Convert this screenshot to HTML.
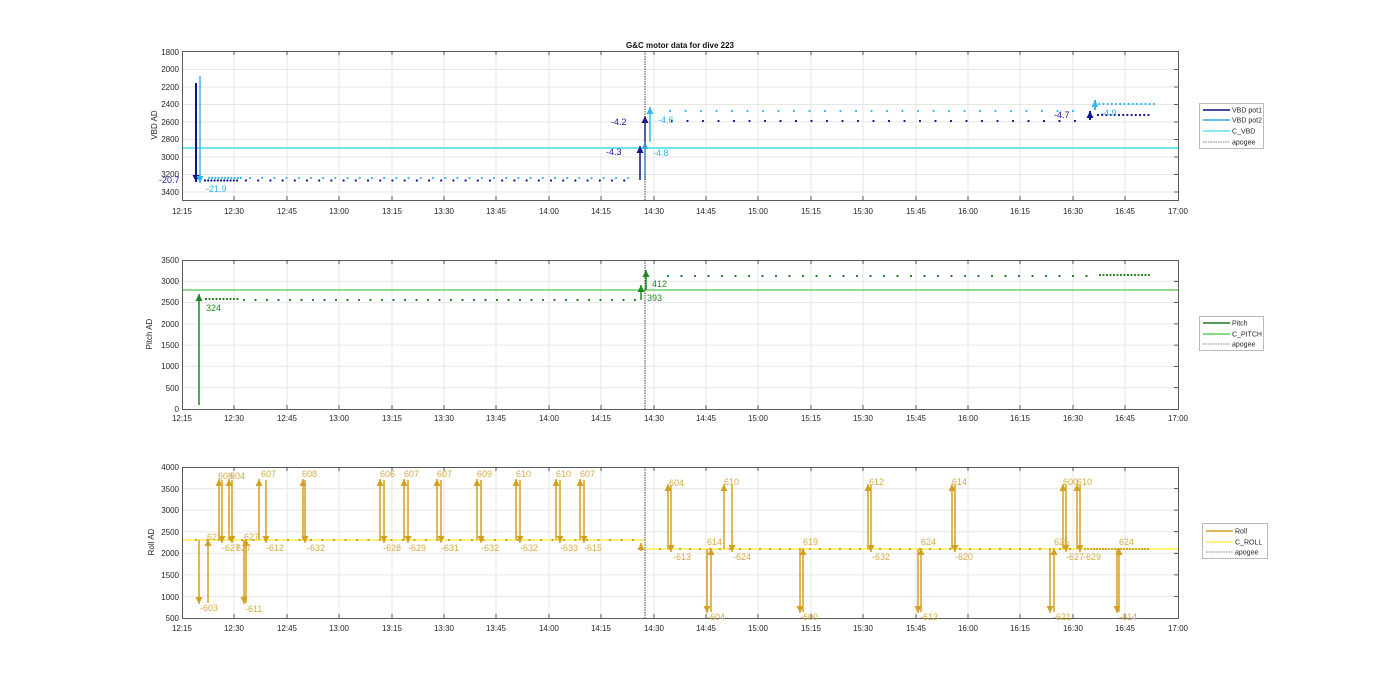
<!DOCTYPE html>
<html><head><meta charset="utf-8"><style>
html,body{margin:0;padding:0;background:#fff;}
svg{display:block;font-family:"Liberation Sans",sans-serif;}
.t{font-size:8px;fill:#262626;}
.lg{font-size:7px;fill:#262626;}
.gr{stroke:#e6e6e6;stroke-width:1;fill:none;}
.tk{stroke:#333;stroke-width:0.8;fill:none;}
.dt{stroke-linecap:round;stroke-width:2.2;}
</style></head><body>
<svg width="1400" height="693" viewBox="0 0 1400 693" xmlns="http://www.w3.org/2000/svg">
<defs>
<marker id="mB" viewBox="0 0 8 8" refX="8" refY="4" markerWidth="8" markerHeight="7" markerUnits="userSpaceOnUse" orient="auto"><path d="M0,0L8,4L0,8z" fill="#101090"/></marker>
<marker id="mL" viewBox="0 0 8 8" refX="8" refY="4" markerWidth="8" markerHeight="7" markerUnits="userSpaceOnUse" orient="auto"><path d="M0,0L8,4L0,8z" fill="#35b8ea"/></marker>
<marker id="mG" viewBox="0 0 8 8" refX="8" refY="4" markerWidth="8" markerHeight="7" markerUnits="userSpaceOnUse" orient="auto"><path d="M0,0L8,4L0,8z" fill="#1e8a1e"/></marker>
<marker id="mR" viewBox="0 0 8 8" refX="8" refY="4" markerWidth="8" markerHeight="7" markerUnits="userSpaceOnUse" orient="auto"><path d="M0,0L8,4L0,8z" fill="#d4a020"/></marker>
</defs>
<rect width="1400" height="693" fill="#fff"/>
<!-- grids -->
<path class="gr" d="M234 51V200M287 51V200M339 51V200M392 51V200M444 51V200M496 51V200M549 51V200M601 51V200M654 51V200M706 51V200M758 51V200M811 51V200M863 51V200M916 51V200M968 51V200M1020 51V200M1073 51V200M1125 51V200M182 69.5H1178M182 87H1178M182 104.5H1178M182 122H1178M182 139.5H1178M182 157H1178M182 174.5H1178M182 192H1178"/>
<path class="gr" d="M234 260V409M287 260V409M339 260V409M392 260V409M444 260V409M496 260V409M549 260V409M601 260V409M654 260V409M706 260V409M758 260V409M811 260V409M863 260V409M916 260V409M968 260V409M1020 260V409M1073 260V409M1125 260V409M182 281.3H1178M182 302.6H1178M182 323.9H1178M182 345.1H1178M182 366.4H1178M182 387.7H1178"/>
<path class="gr" d="M234 467V618M287 467V618M339 467V618M392 467V618M444 467V618M496 467V618M549 467V618M601 467V618M654 467V618M706 467V618M758 467V618M811 467V618M863 467V618M916 467V618M968 467V618M1020 467V618M1073 467V618M1125 467V618M182 488.6H1178M182 510.1H1178M182 531.7H1178M182 553.3H1178M182 574.9H1178M182 596.4H1178"/>
<!-- tick marks -->
<path class="tk" d="M234 200v-4M287 200v-4M339 200v-4M392 200v-4M444 200v-4M496 200v-4M549 200v-4M601 200v-4M654 200v-4M706 200v-4M758 200v-4M811 200v-4M863 200v-4M916 200v-4M968 200v-4M1020 200v-4M1073 200v-4M1125 200v-4M234 51v4M287 51v4M339 51v4M392 51v4M444 51v4M496 51v4M549 51v4M601 51v4M654 51v4M706 51v4M758 51v4M811 51v4M863 51v4M916 51v4M968 51v4M1020 51v4M1073 51v4M1125 51v4M1178 69.5h-4M1178 87h-4M1178 104.5h-4M1178 122h-4M1178 139.5h-4M1178 157h-4M1178 174.5h-4M1178 192h-4"/>
<path class="tk" d="M234 409v-4M287 409v-4M339 409v-4M392 409v-4M444 409v-4M496 409v-4M549 409v-4M601 409v-4M654 409v-4M706 409v-4M758 409v-4M811 409v-4M863 409v-4M916 409v-4M968 409v-4M1020 409v-4M1073 409v-4M1125 409v-4M234 260v4M287 260v4M339 260v4M392 260v4M444 260v4M496 260v4M549 260v4M601 260v4M654 260v4M706 260v4M758 260v4M811 260v4M863 260v4M916 260v4M968 260v4M1020 260v4M1073 260v4M1125 260v4M1178 281.3h-4M1178 302.6h-4M1178 323.9h-4M1178 345.1h-4M1178 366.4h-4M1178 387.7h-4"/>
<path class="tk" d="M234 618v-4M287 618v-4M339 618v-4M392 618v-4M444 618v-4M496 618v-4M549 618v-4M601 618v-4M654 618v-4M706 618v-4M758 618v-4M811 618v-4M863 618v-4M916 618v-4M968 618v-4M1020 618v-4M1073 618v-4M1125 618v-4M234 467v4M287 467v4M339 467v4M392 467v4M444 467v4M496 467v4M549 467v4M601 467v4M654 467v4M706 467v4M758 467v4M811 467v4M863 467v4M916 467v4M968 467v4M1020 467v4M1073 467v4M1125 467v4M1178 488.6h-4M1178 510.1h-4M1178 531.7h-4M1178 553.3h-4M1178 574.9h-4M1178 596.4h-4"/>
<rect x="182.5" y="51.5" width="996" height="149" fill="none" stroke="#333" stroke-width="0.8"/>
<rect x="182.5" y="260.5" width="996" height="149" fill="none" stroke="#333" stroke-width="0.8"/>
<rect x="182.5" y="467.5" width="996" height="151" fill="none" stroke="#333" stroke-width="0.8"/>

<!-- reference lines -->
<line x1="183" y1="148" x2="1178" y2="148" stroke="#6fe6ec" stroke-width="2"/>
<line x1="183" y1="290" x2="1178" y2="290" stroke="#6ad46a" stroke-width="1.5"/>
<line x1="183" y1="540" x2="645" y2="540" stroke="#fff27a" stroke-width="2"/>
<line x1="645" y1="549" x2="1178" y2="549" stroke="#fff27a" stroke-width="2"/>

<!-- VBD dots -->
<line class="dt" x1="205" y1="180.5" x2="240" y2="180.5" stroke="#101090" stroke-dasharray="0 3.2"/>
<line class="dt" x1="209" y1="178" x2="244" y2="178" stroke="#35b8ea" stroke-dasharray="0 3.2"/>
<line class="dt" x1="246" y1="180.5" x2="636" y2="180.5" stroke="#101090" stroke-dasharray="0 12.2"/>
<line class="dt" x1="250" y1="178" x2="636" y2="178" stroke="#35b8ea" stroke-dasharray="0 12.2"/>
<line class="dt" x1="672" y1="121" x2="1088" y2="121" stroke="#101090" stroke-dasharray="0 15.5"/>
<line class="dt" x1="670" y1="111" x2="1086" y2="111" stroke="#35b8ea" stroke-dasharray="0 15.5"/>
<line class="dt" x1="1095" y1="104" x2="1155" y2="104" stroke="#35b8ea" stroke-dasharray="0 4.2" stroke-width="2"/>
<line class="dt" x1="1098" y1="115" x2="1152" y2="115" stroke="#101090" stroke-dasharray="0 4.2" stroke-width="2"/>
<!-- VBD arrows -->
<line x1="196" y1="83" x2="196" y2="182" stroke="#101090" stroke-width="2" marker-end="url(#mB)"/>
<line x1="200" y1="76" x2="200" y2="183" stroke="#35b8ea" stroke-width="1.5" marker-end="url(#mL)"/>
<line x1="640" y1="180" x2="640" y2="146" stroke="#101090" stroke-width="1.5" marker-end="url(#mB)"/>
<line x1="645" y1="148" x2="645" y2="116" stroke="#101090" stroke-width="1.5" marker-end="url(#mB)"/>
<line x1="645" y1="180" x2="645" y2="142" stroke="#35b8ea" stroke-width="1.5" marker-end="url(#mL)"/>
<line x1="650" y1="142" x2="650" y2="107" stroke="#35b8ea" stroke-width="1.5" marker-end="url(#mL)"/>
<line x1="1090" y1="120" x2="1090" y2="111" stroke="#101090" stroke-width="2" marker-end="url(#mB)"/>
<line x1="1095" y1="110" x2="1095" y2="100" stroke="#35b8ea" stroke-width="2" marker-end="url(#mL)"/>

<!-- Pitch dots -->
<line class="dt" x1="206" y1="299" x2="240" y2="299" stroke="#1e7a1e" stroke-width="2" stroke-dasharray="0 3.5"/>
<line class="dt" x1="244" y1="300" x2="636" y2="300" stroke="#1e7a1e" stroke-width="2" stroke-dasharray="0 11.5"/>
<line class="dt" x1="668" y1="276" x2="1098" y2="276" stroke="#1e7a1e" stroke-width="2" stroke-dasharray="0 13.5"/>
<line class="dt" x1="1100" y1="275" x2="1150" y2="275" stroke="#1e7a1e" stroke-width="2" stroke-dasharray="0 3.5"/>
<line x1="199" y1="405" x2="199" y2="294" stroke="#1e8a1e" stroke-width="1.5" marker-end="url(#mG)"/>
<line x1="641" y1="300" x2="641" y2="285" stroke="#1e8a1e" stroke-width="1.5" marker-end="url(#mG)"/>
<line x1="646" y1="290" x2="646" y2="270" stroke="#1e8a1e" stroke-width="1.5" marker-end="url(#mG)"/>

<!-- Roll dots -->
<line class="dt" x1="196" y1="540" x2="636" y2="540" stroke="#c9a030" stroke-width="2" stroke-dasharray="0 11.5"/>
<line class="dt" x1="660" y1="549" x2="1085" y2="549" stroke="#c9a030" stroke-width="2" stroke-dasharray="0 10"/>
<line class="dt" x1="1085" y1="549" x2="1150" y2="549" stroke="#c9a030" stroke-width="2" stroke-dasharray="0 3"/>
<!-- Roll arrows -->
<g stroke="#d4a020" stroke-width="1.5" marker-end="url(#mR)">
<line x1="199" y1="540" x2="199" y2="604"/><line x1="208" y1="603" x2="208" y2="539"/>
<line x1="219" y1="540" x2="219" y2="479"/><line x1="222" y1="480" x2="222" y2="543"/>
<line x1="229" y1="540" x2="229" y2="479"/><line x1="232" y1="480" x2="232" y2="543"/>
<line x1="244" y1="540" x2="244" y2="604"/><line x1="246" y1="603" x2="246" y2="539"/>
<line x1="259" y1="540" x2="259" y2="479"/><line x1="266" y1="480" x2="266" y2="543"/>
<line x1="303" y1="540" x2="303" y2="479"/><line x1="305" y1="480" x2="305" y2="543"/>
<line x1="380" y1="540" x2="380" y2="479"/><line x1="384" y1="480" x2="384" y2="543"/>
<line x1="404" y1="540" x2="404" y2="479"/><line x1="408" y1="480" x2="408" y2="543"/>
<line x1="437" y1="540" x2="437" y2="479"/><line x1="441" y1="480" x2="441" y2="543"/>
<line x1="477" y1="540" x2="477" y2="479"/><line x1="481" y1="480" x2="481" y2="543"/>
<line x1="516" y1="540" x2="516" y2="479"/><line x1="520" y1="480" x2="520" y2="543"/>
<line x1="556" y1="540" x2="556" y2="479"/><line x1="560" y1="480" x2="560" y2="543"/>
<line x1="580" y1="540" x2="580" y2="479"/><line x1="584" y1="480" x2="584" y2="543"/>
<line x1="641" y1="551" x2="641" y2="543"/>
<line x1="668" y1="549" x2="668" y2="484"/><line x1="671" y1="485" x2="671" y2="552"/>
<line x1="707" y1="549" x2="707" y2="613"/><line x1="711" y1="612" x2="711" y2="548"/>
<line x1="724" y1="549" x2="724" y2="484"/><line x1="732" y1="485" x2="732" y2="552"/>
<line x1="800" y1="549" x2="800" y2="613"/><line x1="803" y1="612" x2="803" y2="548"/>
<line x1="868" y1="549" x2="868" y2="484"/><line x1="871" y1="485" x2="871" y2="552"/>
<line x1="918" y1="549" x2="918" y2="613"/><line x1="921" y1="612" x2="921" y2="548"/>
<line x1="952" y1="549" x2="952" y2="484"/><line x1="955" y1="485" x2="955" y2="552"/>
<line x1="1050" y1="549" x2="1050" y2="613"/><line x1="1054" y1="612" x2="1054" y2="548"/>
<line x1="1063" y1="549" x2="1063" y2="484"/><line x1="1066" y1="485" x2="1066" y2="552"/>
<line x1="1077" y1="549" x2="1077" y2="484"/><line x1="1080" y1="485" x2="1080" y2="552"/>
<line x1="1117" y1="549" x2="1117" y2="613"/><line x1="1119" y1="612" x2="1119" y2="548"/>
</g>

<!-- apogee lines -->
<g stroke="#444" stroke-width="1" stroke-dasharray="1.5,1">
<line x1="645" y1="51" x2="645" y2="200"/><line x1="645" y1="260" x2="645" y2="409"/><line x1="645" y1="467" x2="645" y2="618"/>
</g>

<!-- title -->
<text x="680" y="48" text-anchor="middle" style="font-size:8px;font-weight:bold;fill:#111">G&amp;C motor data for dive 223</text>
<text transform="translate(157,125) rotate(-90)" text-anchor="middle" class="t">VBD AD</text>
<text transform="translate(152,334) rotate(-90)" text-anchor="middle" class="t">Pitch AD</text>
<text transform="translate(154,542) rotate(-90)" text-anchor="middle" class="t">Roll AD</text>
<g class="t" text-anchor="end">
<text x="179" y="55">1800</text><text x="179" y="72">2000</text><text x="179" y="90">2200</text><text x="179" y="107">2400</text><text x="179" y="125">2600</text><text x="179" y="142">2800</text><text x="179" y="160">3000</text><text x="179" y="177">3200</text><text x="179" y="195">3400</text>
<text x="179" y="263">3500</text><text x="179" y="284">3000</text><text x="179" y="305">2500</text><text x="179" y="327">2000</text><text x="179" y="348">1500</text><text x="179" y="369">1000</text><text x="179" y="391">500</text><text x="179" y="412">0</text>
<text x="179" y="470">4000</text><text x="179" y="492">3500</text><text x="179" y="513">3000</text><text x="179" y="535">2500</text><text x="179" y="556">2000</text><text x="179" y="578">1500</text><text x="179" y="600">1000</text><text x="179" y="621">500</text>
</g>
<g class="t" text-anchor="middle">
<text x="182" y="214">12:15</text><text x="234" y="214">12:30</text><text x="287" y="214">12:45</text><text x="339" y="214">13:00</text><text x="392" y="214">13:15</text><text x="444" y="214">13:30</text><text x="496" y="214">13:45</text><text x="549" y="214">14:00</text><text x="601" y="214">14:15</text><text x="654" y="214">14:30</text><text x="706" y="214">14:45</text><text x="758" y="214">15:00</text><text x="811" y="214">15:15</text><text x="863" y="214">15:30</text><text x="916" y="214">15:45</text><text x="968" y="214">16:00</text><text x="1020" y="214">16:15</text><text x="1073" y="214">16:30</text><text x="1125" y="214">16:45</text><text x="1178" y="214">17:00</text>
<text x="182" y="421">12:15</text><text x="234" y="421">12:30</text><text x="287" y="421">12:45</text><text x="339" y="421">13:00</text><text x="392" y="421">13:15</text><text x="444" y="421">13:30</text><text x="496" y="421">13:45</text><text x="549" y="421">14:00</text><text x="601" y="421">14:15</text><text x="654" y="421">14:30</text><text x="706" y="421">14:45</text><text x="758" y="421">15:00</text><text x="811" y="421">15:15</text><text x="863" y="421">15:30</text><text x="916" y="421">15:45</text><text x="968" y="421">16:00</text><text x="1020" y="421">16:15</text><text x="1073" y="421">16:30</text><text x="1125" y="421">16:45</text><text x="1178" y="421">17:00</text>
<text x="182" y="631">12:15</text><text x="234" y="631">12:30</text><text x="287" y="631">12:45</text><text x="339" y="631">13:00</text><text x="392" y="631">13:15</text><text x="444" y="631">13:30</text><text x="496" y="631">13:45</text><text x="549" y="631">14:00</text><text x="601" y="631">14:15</text><text x="654" y="631">14:30</text><text x="706" y="631">14:45</text><text x="758" y="631">15:00</text><text x="811" y="631">15:15</text><text x="863" y="631">15:30</text><text x="916" y="631">15:45</text><text x="968" y="631">16:00</text><text x="1020" y="631">16:15</text><text x="1073" y="631">16:30</text><text x="1125" y="631">16:45</text><text x="1178" y="631">17:00</text>
</g>
<g style="font-size:9px">
<text x="159" y="183" fill="#1a1aa0">-20.7</text>
<text x="206" y="192" fill="#30b4e8">-21.9</text>
<text x="611" y="125" fill="#1a1aa0">-4.2</text>
<text x="606" y="155" fill="#1a1aa0">-4.3</text>
<text x="658" y="123" fill="#30b4e8">-4.6</text>
<text x="653" y="156" fill="#30b4e8">-4.8</text>
<text x="1054" y="118" fill="#1a1aa0">-4.7</text>
<text x="1101" y="116" fill="#30b4e8">-4.9</text>
</g>
<g style="font-size:9px;fill:#228b22">
<text x="206" y="311">324</text><text x="652" y="287">412</text><text x="647" y="301">393</text>
</g>
<g style="font-size:9px;fill:#d6aa45">
<text x="200" y="611">-603</text><text x="207" y="540">621</text><text x="218" y="479">608</text><text x="230" y="479">604</text>
<text x="222" y="551">-627</text><text x="236" y="551">627</text><text x="244" y="540">627</text><text x="245" y="612">-611</text>
<text x="261" y="477">607</text><text x="266" y="551">-612</text><text x="302" y="477">608</text><text x="307" y="551">-632</text>
<text x="380" y="477">606</text><text x="383" y="551">-628</text><text x="404" y="477">607</text><text x="408" y="551">-629</text>
<text x="437" y="477">607</text><text x="441" y="551">-631</text><text x="477" y="477">609</text><text x="481" y="551">-632</text>
<text x="516" y="477">610</text><text x="520" y="551">-632</text><text x="556" y="477">610</text><text x="560" y="551">-633</text>
<text x="580" y="477">607</text><text x="584" y="551">-615</text>
<text x="669" y="486">604</text><text x="673" y="560">-613</text><text x="707" y="545">614</text><text x="707" y="620">-604</text>
<text x="724" y="485">610</text><text x="733" y="560">-624</text><text x="803" y="545">619</text><text x="800" y="620">-600</text>
<text x="869" y="485">612</text><text x="872" y="560">-632</text><text x="921" y="545">624</text><text x="920" y="620">-613</text>
<text x="952" y="485">614</text><text x="955" y="560">-620</text><text x="1054" y="545">625</text><text x="1053" y="620">-621</text>
<text x="1063" y="485">600</text><text x="1066" y="560">-627</text><text x="1077" y="485">610</text><text x="1083" y="560">-629</text>
<text x="1119" y="545">624</text><text x="1119" y="620">-614</text>
</g>
<!-- legends -->
<rect x="1199.5" y="103.5" width="64" height="45" fill="#fff" stroke="#aaa" stroke-width="0.8"/>
<line x1="1203" y1="110" x2="1230" y2="110" stroke="#0d0d8c" stroke-width="1.5"/><text x="1232" y="112.5" class="lg">VBD pot1</text>
<line x1="1203" y1="120" x2="1230" y2="120" stroke="#30a8e0" stroke-width="1.5"/><text x="1232" y="122.5" class="lg">VBD pot2</text>
<line x1="1203" y1="131" x2="1230" y2="131" stroke="#5ee6ec" stroke-width="1.5"/><text x="1232" y="133.5" class="lg">C_VBD</text>
<line x1="1203" y1="142" x2="1230" y2="142" stroke="#555" stroke-width="0.8" stroke-dasharray="1.5,1"/><text x="1232" y="144.5" class="lg">apogee</text>
<rect x="1199.5" y="316.5" width="64" height="34" fill="#fff" stroke="#aaa" stroke-width="0.8"/>
<line x1="1203" y1="323" x2="1230" y2="323" stroke="#1e7a1e" stroke-width="1.5"/><text x="1232" y="325.5" class="lg">Pitch</text>
<line x1="1203" y1="334" x2="1230" y2="334" stroke="#5ad05a" stroke-width="1.5"/><text x="1232" y="336.5" class="lg">C_PITCH</text>
<line x1="1203" y1="344" x2="1230" y2="344" stroke="#555" stroke-width="0.8" stroke-dasharray="1.5,1"/><text x="1232" y="346.5" class="lg">apogee</text>
<rect x="1202.5" y="523.5" width="65" height="35" fill="#fff" stroke="#aaa" stroke-width="0.8"/>
<line x1="1206" y1="531" x2="1233" y2="531" stroke="#d4a020" stroke-width="1.5"/><text x="1235" y="533.5" class="lg">Roll</text>
<line x1="1206" y1="542" x2="1233" y2="542" stroke="#ffee55" stroke-width="1.5"/><text x="1235" y="544.5" class="lg">C_ROLL</text>
<line x1="1206" y1="552" x2="1233" y2="552" stroke="#555" stroke-width="0.8" stroke-dasharray="1.5,1"/><text x="1235" y="554.5" class="lg">apogee</text>
</svg>
</body></html>
